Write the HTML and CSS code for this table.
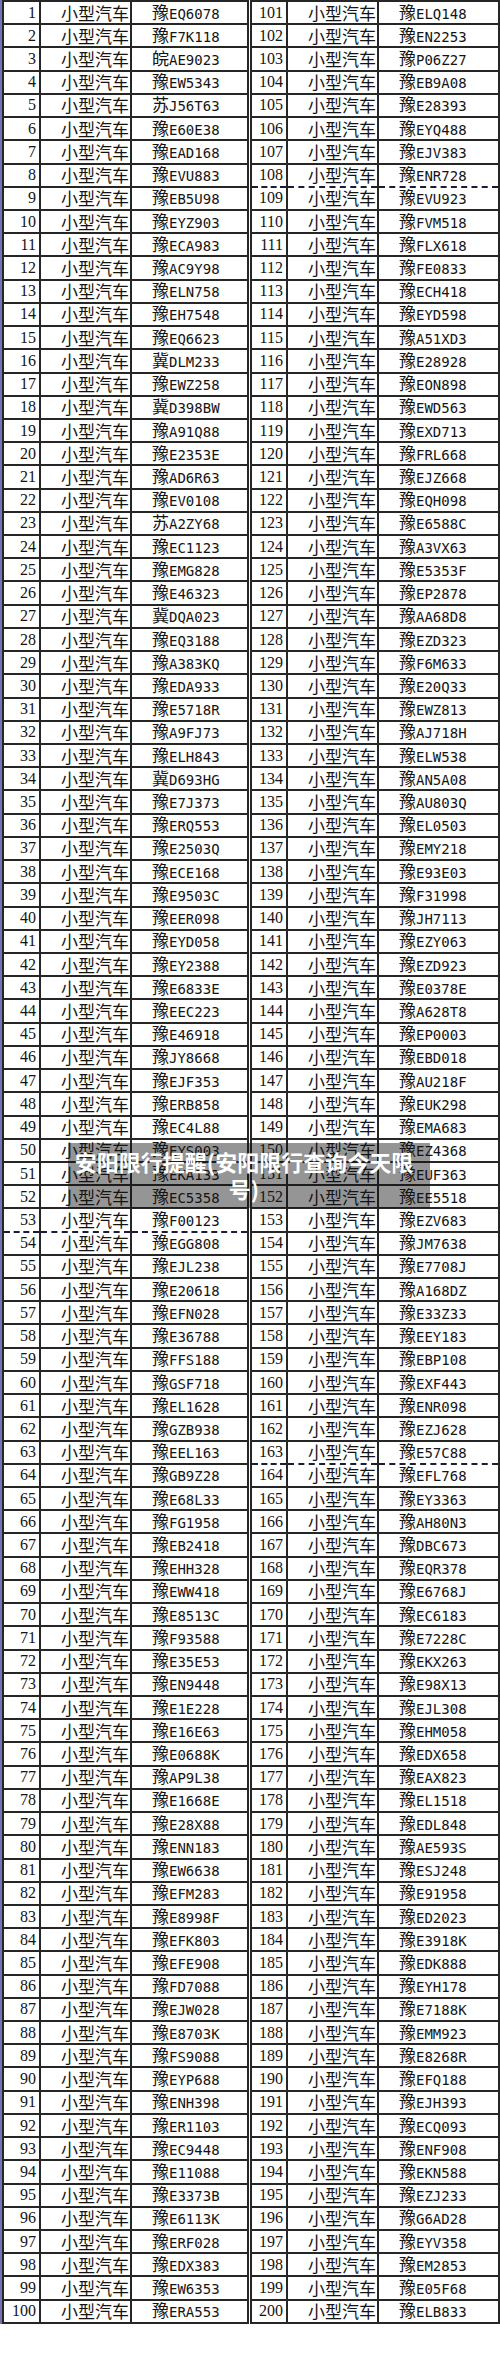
FILE: index.html
```html
<!DOCTYPE html>
<html lang="zh-CN">
<head>
<meta charset="utf-8">
<title>安阳限行提醒</title>
<link rel="stylesheet" href="styles.css">
</head>
<body>
<div class="page">
  <div class="sheet">
    <table class="grid grid-left">
      <colgroup><col class="c-num"><col class="c-type"><col class="c-plate"></colgroup>
      <tbody>
        <tr><td>1</td><td>小型汽车</td><td>豫EQ6078</td></tr>
        <tr><td>2</td><td>小型汽车</td><td>豫F7K118</td></tr>
        <tr><td>3</td><td>小型汽车</td><td>皖AE9023</td></tr>
        <tr><td>4</td><td>小型汽车</td><td>豫EW5343</td></tr>
        <tr><td>5</td><td>小型汽车</td><td>苏J56T63</td></tr>
        <tr><td>6</td><td>小型汽车</td><td>豫E60E38</td></tr>
        <tr><td>7</td><td>小型汽车</td><td>豫EAD168</td></tr>
        <tr><td>8</td><td>小型汽车</td><td>豫EVU883</td></tr>
        <tr><td>9</td><td>小型汽车</td><td>豫EB5U98</td></tr>
        <tr><td>10</td><td>小型汽车</td><td>豫EYZ903</td></tr>
        <tr><td>11</td><td>小型汽车</td><td>豫ECA983</td></tr>
        <tr><td>12</td><td>小型汽车</td><td>豫AC9Y98</td></tr>
        <tr><td>13</td><td>小型汽车</td><td>豫ELN758</td></tr>
        <tr><td>14</td><td>小型汽车</td><td>豫EH7548</td></tr>
        <tr><td>15</td><td>小型汽车</td><td>豫EQ6623</td></tr>
        <tr><td>16</td><td>小型汽车</td><td>冀DLM233</td></tr>
        <tr><td>17</td><td>小型汽车</td><td>豫EWZ258</td></tr>
        <tr><td>18</td><td>小型汽车</td><td>冀D398BW</td></tr>
        <tr><td>19</td><td>小型汽车</td><td>豫A91Q88</td></tr>
        <tr><td>20</td><td>小型汽车</td><td>豫E2353E</td></tr>
        <tr><td>21</td><td>小型汽车</td><td>豫AD6R63</td></tr>
        <tr><td>22</td><td>小型汽车</td><td>豫EV0108</td></tr>
        <tr><td>23</td><td>小型汽车</td><td>苏A2ZY68</td></tr>
        <tr><td>24</td><td>小型汽车</td><td>豫EC1123</td></tr>
        <tr><td>25</td><td>小型汽车</td><td>豫EMG828</td></tr>
        <tr><td>26</td><td>小型汽车</td><td>豫E46323</td></tr>
        <tr><td>27</td><td>小型汽车</td><td>冀DQA023</td></tr>
        <tr><td>28</td><td>小型汽车</td><td>豫EQ3188</td></tr>
        <tr><td>29</td><td>小型汽车</td><td>豫A383KQ</td></tr>
        <tr><td>30</td><td>小型汽车</td><td>豫EDA933</td></tr>
        <tr><td>31</td><td>小型汽车</td><td>豫E5718R</td></tr>
        <tr><td>32</td><td>小型汽车</td><td>豫A9FJ73</td></tr>
        <tr><td>33</td><td>小型汽车</td><td>豫ELH843</td></tr>
        <tr><td>34</td><td>小型汽车</td><td>冀D693HG</td></tr>
        <tr><td>35</td><td>小型汽车</td><td>豫E7J373</td></tr>
        <tr><td>36</td><td>小型汽车</td><td>豫ERQ553</td></tr>
        <tr><td>37</td><td>小型汽车</td><td>豫E2503Q</td></tr>
        <tr><td>38</td><td>小型汽车</td><td>豫ECE168</td></tr>
        <tr><td>39</td><td>小型汽车</td><td>豫E9503C</td></tr>
        <tr><td>40</td><td>小型汽车</td><td>豫EER098</td></tr>
        <tr><td>41</td><td>小型汽车</td><td>豫EYD058</td></tr>
        <tr><td>42</td><td>小型汽车</td><td>豫EY2388</td></tr>
        <tr><td>43</td><td>小型汽车</td><td>豫E6833E</td></tr>
        <tr><td>44</td><td>小型汽车</td><td>豫EEC223</td></tr>
        <tr><td>45</td><td>小型汽车</td><td>豫E46918</td></tr>
        <tr><td>46</td><td>小型汽车</td><td>豫JY8668</td></tr>
        <tr><td>47</td><td>小型汽车</td><td>豫EJF353</td></tr>
        <tr><td>48</td><td>小型汽车</td><td>豫ERB858</td></tr>
        <tr><td>49</td><td>小型汽车</td><td>豫EC4L88</td></tr>
        <tr><td>50</td><td>小型汽车</td><td>豫EYS003</td></tr>
        <tr><td>51</td><td>小型汽车</td><td>豫EKA133</td></tr>
        <tr><td>52</td><td>小型汽车</td><td>豫EC5358</td></tr>
        <tr class="brk"><td>53</td><td>小型汽车</td><td>豫F00123</td></tr>
        <tr><td>54</td><td>小型汽车</td><td>豫EGG808</td></tr>
        <tr><td>55</td><td>小型汽车</td><td>豫EJL238</td></tr>
        <tr><td>56</td><td>小型汽车</td><td>豫E20618</td></tr>
        <tr><td>57</td><td>小型汽车</td><td>豫EFN028</td></tr>
        <tr><td>58</td><td>小型汽车</td><td>豫E36788</td></tr>
        <tr><td>59</td><td>小型汽车</td><td>豫FFS188</td></tr>
        <tr><td>60</td><td>小型汽车</td><td>豫GSF718</td></tr>
        <tr><td>61</td><td>小型汽车</td><td>豫EL1628</td></tr>
        <tr><td>62</td><td>小型汽车</td><td>豫GZB938</td></tr>
        <tr><td>63</td><td>小型汽车</td><td>豫EEL163</td></tr>
        <tr><td>64</td><td>小型汽车</td><td>豫GB9Z28</td></tr>
        <tr><td>65</td><td>小型汽车</td><td>豫E68L33</td></tr>
        <tr><td>66</td><td>小型汽车</td><td>豫FG1958</td></tr>
        <tr><td>67</td><td>小型汽车</td><td>豫EB2418</td></tr>
        <tr><td>68</td><td>小型汽车</td><td>豫EHH328</td></tr>
        <tr><td>69</td><td>小型汽车</td><td>豫EWW418</td></tr>
        <tr><td>70</td><td>小型汽车</td><td>豫E8513C</td></tr>
        <tr><td>71</td><td>小型汽车</td><td>豫F93588</td></tr>
        <tr><td>72</td><td>小型汽车</td><td>豫E35E53</td></tr>
        <tr><td>73</td><td>小型汽车</td><td>豫EN9448</td></tr>
        <tr><td>74</td><td>小型汽车</td><td>豫E1E228</td></tr>
        <tr><td>75</td><td>小型汽车</td><td>豫E16E63</td></tr>
        <tr><td>76</td><td>小型汽车</td><td>豫E0688K</td></tr>
        <tr><td>77</td><td>小型汽车</td><td>豫AP9L38</td></tr>
        <tr><td>78</td><td>小型汽车</td><td>豫E1668E</td></tr>
        <tr><td>79</td><td>小型汽车</td><td>豫E28X88</td></tr>
        <tr><td>80</td><td>小型汽车</td><td>豫ENN183</td></tr>
        <tr><td>81</td><td>小型汽车</td><td>豫EW6638</td></tr>
        <tr><td>82</td><td>小型汽车</td><td>豫EFM283</td></tr>
        <tr><td>83</td><td>小型汽车</td><td>豫E8998F</td></tr>
        <tr><td>84</td><td>小型汽车</td><td>豫EFK803</td></tr>
        <tr><td>85</td><td>小型汽车</td><td>豫EFE908</td></tr>
        <tr><td>86</td><td>小型汽车</td><td>豫FD7088</td></tr>
        <tr><td>87</td><td>小型汽车</td><td>豫EJW028</td></tr>
        <tr><td>88</td><td>小型汽车</td><td>豫E8703K</td></tr>
        <tr><td>89</td><td>小型汽车</td><td>豫FS9088</td></tr>
        <tr><td>90</td><td>小型汽车</td><td>豫EYP688</td></tr>
        <tr><td>91</td><td>小型汽车</td><td>豫ENH398</td></tr>
        <tr><td>92</td><td>小型汽车</td><td>豫ER1103</td></tr>
        <tr><td>93</td><td>小型汽车</td><td>豫EC9448</td></tr>
        <tr><td>94</td><td>小型汽车</td><td>豫E11088</td></tr>
        <tr><td>95</td><td>小型汽车</td><td>豫E3373B</td></tr>
        <tr><td>96</td><td>小型汽车</td><td>豫E6113K</td></tr>
        <tr><td>97</td><td>小型汽车</td><td>豫ERF028</td></tr>
        <tr><td>98</td><td>小型汽车</td><td>豫EDX383</td></tr>
        <tr><td>99</td><td>小型汽车</td><td>豫EW6353</td></tr>
        <tr><td>100</td><td>小型汽车</td><td>豫ERA553</td></tr>
      </tbody>
    </table>
    <table class="grid grid-right">
      <colgroup><col class="c-num"><col class="c-type"><col class="c-plate"></colgroup>
      <tbody>
        <tr><td>101</td><td>小型汽车</td><td>豫ELQ148</td></tr>
        <tr><td>102</td><td>小型汽车</td><td>豫EN2253</td></tr>
        <tr><td>103</td><td>小型汽车</td><td>豫P06Z27</td></tr>
        <tr><td>104</td><td>小型汽车</td><td>豫EB9A08</td></tr>
        <tr><td>105</td><td>小型汽车</td><td>豫E28393</td></tr>
        <tr><td>106</td><td>小型汽车</td><td>豫EYQ488</td></tr>
        <tr><td>107</td><td>小型汽车</td><td>豫EJV383</td></tr>
        <tr class="brk"><td>108</td><td>小型汽车</td><td>豫ENR728</td></tr>
        <tr><td>109</td><td>小型汽车</td><td>豫EVU923</td></tr>
        <tr><td>110</td><td>小型汽车</td><td>豫FVM518</td></tr>
        <tr><td>111</td><td>小型汽车</td><td>豫FLX618</td></tr>
        <tr><td>112</td><td>小型汽车</td><td>豫FE0833</td></tr>
        <tr><td>113</td><td>小型汽车</td><td>豫ECH418</td></tr>
        <tr><td>114</td><td>小型汽车</td><td>豫EYD598</td></tr>
        <tr><td>115</td><td>小型汽车</td><td>豫A51XD3</td></tr>
        <tr><td>116</td><td>小型汽车</td><td>豫E28928</td></tr>
        <tr><td>117</td><td>小型汽车</td><td>豫EON898</td></tr>
        <tr><td>118</td><td>小型汽车</td><td>豫EWD563</td></tr>
        <tr><td>119</td><td>小型汽车</td><td>豫EXD713</td></tr>
        <tr><td>120</td><td>小型汽车</td><td>豫FRL668</td></tr>
        <tr><td>121</td><td>小型汽车</td><td>豫EJZ668</td></tr>
        <tr><td>122</td><td>小型汽车</td><td>豫EQH098</td></tr>
        <tr><td>123</td><td>小型汽车</td><td>豫E6588C</td></tr>
        <tr><td>124</td><td>小型汽车</td><td>豫A3VX63</td></tr>
        <tr><td>125</td><td>小型汽车</td><td>豫E5353F</td></tr>
        <tr><td>126</td><td>小型汽车</td><td>豫EP2878</td></tr>
        <tr><td>127</td><td>小型汽车</td><td>豫AA68D8</td></tr>
        <tr><td>128</td><td>小型汽车</td><td>豫EZD323</td></tr>
        <tr><td>129</td><td>小型汽车</td><td>豫F6M633</td></tr>
        <tr><td>130</td><td>小型汽车</td><td>豫E20Q33</td></tr>
        <tr><td>131</td><td>小型汽车</td><td>豫EWZ813</td></tr>
        <tr><td>132</td><td>小型汽车</td><td>豫AJ718H</td></tr>
        <tr><td>133</td><td>小型汽车</td><td>豫ELW538</td></tr>
        <tr><td>134</td><td>小型汽车</td><td>豫AN5A08</td></tr>
        <tr><td>135</td><td>小型汽车</td><td>豫AU803Q</td></tr>
        <tr><td>136</td><td>小型汽车</td><td>豫EL0503</td></tr>
        <tr><td>137</td><td>小型汽车</td><td>豫EMY218</td></tr>
        <tr><td>138</td><td>小型汽车</td><td>豫E93E03</td></tr>
        <tr><td>139</td><td>小型汽车</td><td>豫F31998</td></tr>
        <tr><td>140</td><td>小型汽车</td><td>豫JH7113</td></tr>
        <tr><td>141</td><td>小型汽车</td><td>豫EZY063</td></tr>
        <tr><td>142</td><td>小型汽车</td><td>豫EZD923</td></tr>
        <tr><td>143</td><td>小型汽车</td><td>豫E0378E</td></tr>
        <tr><td>144</td><td>小型汽车</td><td>豫A628T8</td></tr>
        <tr><td>145</td><td>小型汽车</td><td>豫EP0003</td></tr>
        <tr><td>146</td><td>小型汽车</td><td>豫EBD018</td></tr>
        <tr><td>147</td><td>小型汽车</td><td>豫AU218F</td></tr>
        <tr><td>148</td><td>小型汽车</td><td>豫EUK298</td></tr>
        <tr><td>149</td><td>小型汽车</td><td>豫EMA683</td></tr>
        <tr><td>150</td><td>小型汽车</td><td>豫EZ4368</td></tr>
        <tr><td>151</td><td>小型汽车</td><td>豫EUF363</td></tr>
        <tr><td>152</td><td>小型汽车</td><td>豫EE5518</td></tr>
        <tr><td>153</td><td>小型汽车</td><td>豫EZV683</td></tr>
        <tr><td>154</td><td>小型汽车</td><td>豫JM7638</td></tr>
        <tr><td>155</td><td>小型汽车</td><td>豫E7708J</td></tr>
        <tr><td>156</td><td>小型汽车</td><td>豫A168DZ</td></tr>
        <tr><td>157</td><td>小型汽车</td><td>豫E33Z33</td></tr>
        <tr><td>158</td><td>小型汽车</td><td>豫EEY183</td></tr>
        <tr><td>159</td><td>小型汽车</td><td>豫EBP108</td></tr>
        <tr><td>160</td><td>小型汽车</td><td>豫EXF443</td></tr>
        <tr><td>161</td><td>小型汽车</td><td>豫ENR098</td></tr>
        <tr><td>162</td><td>小型汽车</td><td>豫EZJ628</td></tr>
        <tr class="brk"><td>163</td><td>小型汽车</td><td>豫E57C88</td></tr>
        <tr><td>164</td><td>小型汽车</td><td>豫EFL768</td></tr>
        <tr><td>165</td><td>小型汽车</td><td>豫EY3363</td></tr>
        <tr><td>166</td><td>小型汽车</td><td>豫AH80N3</td></tr>
        <tr><td>167</td><td>小型汽车</td><td>豫DBC673</td></tr>
        <tr><td>168</td><td>小型汽车</td><td>豫EQR378</td></tr>
        <tr><td>169</td><td>小型汽车</td><td>豫E6768J</td></tr>
        <tr><td>170</td><td>小型汽车</td><td>豫EC6183</td></tr>
        <tr><td>171</td><td>小型汽车</td><td>豫E7228C</td></tr>
        <tr><td>172</td><td>小型汽车</td><td>豫EKX263</td></tr>
        <tr><td>173</td><td>小型汽车</td><td>豫E98X13</td></tr>
        <tr><td>174</td><td>小型汽车</td><td>豫EJL308</td></tr>
        <tr><td>175</td><td>小型汽车</td><td>豫EHM058</td></tr>
        <tr><td>176</td><td>小型汽车</td><td>豫EDX658</td></tr>
        <tr><td>177</td><td>小型汽车</td><td>豫EAX823</td></tr>
        <tr><td>178</td><td>小型汽车</td><td>豫EL1518</td></tr>
        <tr><td>179</td><td>小型汽车</td><td>豫EDL848</td></tr>
        <tr><td>180</td><td>小型汽车</td><td>豫AE593S</td></tr>
        <tr><td>181</td><td>小型汽车</td><td>豫ESJ248</td></tr>
        <tr><td>182</td><td>小型汽车</td><td>豫E91958</td></tr>
        <tr><td>183</td><td>小型汽车</td><td>豫ED2023</td></tr>
        <tr><td>184</td><td>小型汽车</td><td>豫E3918K</td></tr>
        <tr><td>185</td><td>小型汽车</td><td>豫EDK888</td></tr>
        <tr><td>186</td><td>小型汽车</td><td>豫EYH178</td></tr>
        <tr><td>187</td><td>小型汽车</td><td>豫E7188K</td></tr>
        <tr><td>188</td><td>小型汽车</td><td>豫EMM923</td></tr>
        <tr><td>189</td><td>小型汽车</td><td>豫E8268R</td></tr>
        <tr><td>190</td><td>小型汽车</td><td>豫EFQ188</td></tr>
        <tr><td>191</td><td>小型汽车</td><td>豫EJH393</td></tr>
        <tr><td>192</td><td>小型汽车</td><td>豫ECQ093</td></tr>
        <tr><td>193</td><td>小型汽车</td><td>豫ENF908</td></tr>
        <tr><td>194</td><td>小型汽车</td><td>豫EKN588</td></tr>
        <tr><td>195</td><td>小型汽车</td><td>豫EZJ233</td></tr>
        <tr><td>196</td><td>小型汽车</td><td>豫G6AD28</td></tr>
        <tr><td>197</td><td>小型汽车</td><td>豫EYV358</td></tr>
        <tr><td>198</td><td>小型汽车</td><td>豫EM2853</td></tr>
        <tr><td>199</td><td>小型汽车</td><td>豫E05F68</td></tr>
        <tr><td>200</td><td>小型汽车</td><td>豫ELB833</td></tr>
      </tbody>
    </table>
  </div>
  <div class="banner">安阳限行提醒(安阳限行查询今天限<br>号)</div>
</div>
</body>
</html>
```

FILE: styles.css
```css
html, body {
  margin: 0;
  padding: 0;
  background: #ffffff;
}

.page {
  position: relative;
  width: 500px;
  height: 2354px;
  overflow: hidden;
  background: #ffffff;
}

.sheet {
  display: flex;
  align-items: flex-start;
  column-gap: 1px;
  border-left: 2px solid #7474b4;
  height: 2324px;
}

.grid {
  border-collapse: collapse;
  table-layout: fixed;
  height: 2324px;
  color: #141414;
}

.grid-left {
  width: 247px;
}

.grid-right {
  width: 250px;
}

.grid .c-num {
  width: 37px;
}

.grid .c-type {
  width: 91px;
}

.grid td {
  border: 2px solid #262626;
  padding: 0;
  line-height: 18px;
  white-space: nowrap;
  vertical-align: middle;
}

.grid-right .c-num {
  width: 36px;
}

.grid td:nth-child(1) {
  text-align: right;
  padding-right: 3px;
  font-family: "Liberation Serif", serif;
  font-size: 16px;
}

.grid td:nth-child(2) {
  text-align: right;
  padding-right: 1px;
  font-family: "Noto Sans CJK SC", sans-serif;
  font-size: 17px;
}

.grid td:nth-child(3) {
  text-align: left;
  padding-left: 20px;
  font-family: "DejaVu Sans Mono", "Noto Sans CJK SC", monospace;
  font-size: 14px;
}

.grid td:nth-child(3)::first-letter {
  font-family: "Noto Sans CJK SC", sans-serif;
  font-size: 17px;
  line-height: 18px;
}

.grid tr.brk td {
  border-bottom: 2px dashed #1c1c3a;
}

.grid tr.brk + tr td {
  border-top: 2px dashed #1c1c3a;
}

.banner {
  position: absolute;
  left: 68px;
  top: 1143px;
  width: 352px;
  padding: 5px 10px 6px 0;
  background: rgba(20, 20, 20, 0.45);
  color: #ffffff;
  font-family: "Noto Sans CJK SC", sans-serif;
  font-weight: 700;
  font-size: 22px;
  line-height: 27px;
  text-align: center;
  white-space: nowrap;
}
```
